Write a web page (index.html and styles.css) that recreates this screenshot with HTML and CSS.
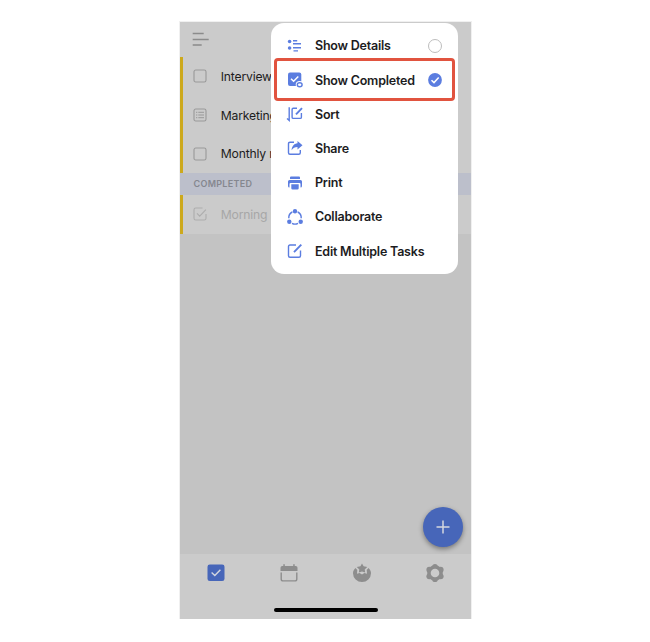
FILE: index.html
```html
<!DOCTYPE html>
<html lang="en">
<head>
<meta charset="utf-8">
<title>Tasks</title>
<link rel="stylesheet" href="styles.css">
</head>
<body>
<main class="phone">
  <header class="topbar">
    <svg width="18" height="14" viewBox="0 0 18 14" fill="none" stroke="#8b8b8b" stroke-width="1.4"><path d="M.7 1.500h11M.7 7.500h16M.7 13h9"/></svg>
  </header>
  <section class="tasks">
    <div class="task"><svg class="box" viewBox="0 0 14 14"><rect x="1" y="1" width="12" height="12" rx="1.8"/></svg><span>Interview</span></div>
    <div class="task"><svg class="box" viewBox="0 0 14 14"><rect x="1" y="1" width="12" height="12" rx="1.8"/><path stroke-width="1" d="M3 4.3h1.3M5.3 4.3H11M3 7h1.3M5.3 7H11M3 9.7h1.3M5.3 9.7H11"/></svg><span>Marketing</span></div>
    <div class="task"><svg class="box" viewBox="0 0 14 14"><rect x="1" y="1" width="12" height="12" rx="1.8"/></svg><span>Monthly r</span></div>
  </section>
  <h2 class="section-title">COMPLETED</h2>
  <section class="tasks">
    <div class="task done"><svg class="box" viewBox="0 0 14 14"><path d="M9.500 1H2.800Q1 1 1 2.800v8.400Q1 13 2.800 13h8.400q1.800 0 1.800-1.800V7M4 6.300l2.700 2.800 6.200-6.500"/></svg><span>Morning r</span></div>
  </section>
  <div class="canvas"></div>
  <nav class="tabbar">
    <div class="tabs">
      <svg width="20" height="20" viewBox="0 0 20 20"><rect x="1.500" y="1.500" width="17" height="16.500" rx="2.300" fill="#4766b9"/><path d="M5.600 9.600l3.200 3 5.600-5.900" fill="none" stroke="#d3d6df" stroke-width="1.400"/></svg>
      <svg width="20" height="20" viewBox="0 0 20 20"><path d="M1.500 8V4.800q0-1.800 1.800-1.800h13.400q1.800 0 1.800 1.800V8zM4.300 1.200h1.500V4H4.300zM14.200 1.200h1.500V4h-1.500z" fill="#8d8d8d"/><path d="M2.200 9.500V16q0 1.900 1.900 1.900h11.800q1.900 0 1.900-1.900V9.500" fill="none" stroke="#8d8d8d" stroke-width="1.400"/></svg>
      <svg width="20" height="20" viewBox="0 0 20 20"><path d="M3.500 5C1.800 6.500 1 8.300 1 10.300a9 8.700 0 0 0 18 0c0-2-.8-3.800-2.500-5.300L14.700 7l.3 3.800-2.600-.7L10 11.400 7.600 10.100l-2.600.7L5.300 7z" fill="#8d8d8d"/><path d="M10 .6l1.600 2.700 3.600.6-2.500 2.600.5 2.900L10 8.600 6.800 9.400l.5-2.900-2.500-2.600 3.600-.6z" fill="#8d8d8d"/></svg>
      <svg width="20" height="20" viewBox="0 0 20 20"><g fill="#8d8d8d"><circle cx="10" cy="10" r="7.800"/><circle cx="10" cy="3.600" r="2.700"/><circle cx="10" cy="16.400" r="2.700"/><circle cx="4.300" cy="6.700" r="2.900"/><circle cx="15.700" cy="6.700" r="2.900"/><circle cx="4.300" cy="13.300" r="2.900"/><circle cx="15.700" cy="13.300" r="2.900"/></g><circle cx="10" cy="10" r="4.300" fill="#cbcbcb"/></svg>
    </div>
    <div class="home-indicator"></div>
  </nav>
  <div class="fab"><svg width="16" height="16" viewBox="0 0 16 16"><path d="M8 1.500v13M1.500 8h13" stroke="#d5d7de" stroke-width="1.500"/></svg></div>
  <div class="menu">
    <div class="item">
      <svg class="icon" viewBox="0 0 16 16"><g fill="#5b7de0"><circle cx="2.600" cy="3.500" r="1.800"/><circle cx="2.600" cy="10" r="1.800"/></g><path d="M6 2.800h4.200M6 5.800h8M6 9.800h8M6.500 12.900h4.500" class="line"/></svg>
      <span>Show Details</span><i class="radio"></i>
    </div>
    <div class="item">
      <svg class="icon" viewBox="0 0 16 16"><rect x="1" y=".5" width="13.300" height="13.500" rx="2" fill="#5b7de0"/><path d="M4 6.800l2.600 2.500L11.300 4.500" fill="none" stroke="#fff" stroke-width="1.500"/><ellipse cx="12.700" cy="12.700" rx="4" ry="3.600" fill="#fff"/><ellipse cx="12.700" cy="12.700" rx="2.400" ry="2" class="line"/></svg>
      <span>Show Completed</span>
      <svg class="check" viewBox="0 0 14 14"><circle cx="7" cy="7" r="6.900" fill="#5b7de0"/><path d="M3.500 7.200l2.500 2.400 4.700-5" fill="none" stroke="#fff" stroke-width="1.500"/></svg>
    </div>
    <div class="item">
      <svg class="icon" viewBox="0 0 16 16"><path class="line" d="M2.200 1.200v13.200L0 12.500M10 2.200H6.300q-1.200 0-1.200 1.200v7.800q0 1.200 1.200 1.200h6.900q1.200 0 1.200-1.200V7"/><path class="line thick" d="M9 8.400l6-6.200"/></svg>
      <span>Sort</span>
    </div>
    <div class="item">
      <svg class="icon" viewBox="0 0 16 16"><path class="line" d="M7 2.200H3q-1.500 0-1.500 1.500v9.100q0 1.500 1.500 1.500h8.800q1.500 0 1.500-1.500V10"/><path d="M10.500 1L15.500 5.200l-5 4.200V7C7.700 7 6.200 8 4.600 10.300c.2-4 2.300-6.600 5.900-7z" fill="#5b7de0"/></svg>
      <span>Share</span>
    </div>
    <div class="item">
      <svg class="icon" viewBox="0 0 16 16"><path d="M4 1.500h8q1 0 1 1V4H3V2.500q0-1 1-1zM2.500 5h11Q15 5 15 6.500V11q0 1.500-1.500 1.500V9q0-1-1-1h-9q-1 0-1 1v3.500Q1 12.500 1 11V6.500Q1 5 2.500 5zM4.300 9.300h7.400v3.900q0 1.300-1.300 1.300H5.600q-1.300 0-1.300-1.300z" fill="#5b7de0"/></svg>
      <span>Print</span>
    </div>
    <div class="item">
      <svg class="icon" viewBox="0 0 16 16"><path class="line" d="M5.300 3A6.400 6.400 0 0 0 1.800 9.200M10.700 3a6.400 6.400 0 0 1 3.500 6.200M5 14.300a6.400 6.400 0 0 0 6 0"/><g fill="#5b7de0"><circle cx="8" cy="2.200" r="2.200"/><circle cx="2.300" cy="12.800" r="2.200"/><circle cx="13.700" cy="12.800" r="2.200"/></g></svg>
      <span>Collaborate</span>
    </div>
    <div class="item">
      <svg class="icon" viewBox="0 0 16 16"><path class="line" d="M9 2H3Q1.500 2 1.500 3.500v9.300q0 1.500 1.500 1.500h9q1.500 0 1.500-1.500V7.500"/><path class="line thick" d="M7 9.100l7.300-7.500"/></svg>
      <span>Edit Multiple Tasks</span>
    </div>
  </div>
  <div class="highlight"></div>
</main>
</body>
</html>
```
FILE: styles.css
```css
* { box-sizing: border-box; }
body {
  margin: 0;
  background: #fff;
  font-family: Inter, "Liberation Sans", sans-serif;
}
.phone {
  position: relative;
  display: flex;
  flex-direction: column;
  width: 291px;
  height: 597px;
  margin: 22px 0 0 180px;
  background: #cbcbcb;
  box-shadow: 0 0 0 1px #f0f0f0;
}
.topbar {
  height: 35px;
  padding: 10px 12px;
}
.topbar svg { display: block; }
.tasks { border-left: 3px solid #cda91c; }
.task {
  display: flex;
  align-items: center;
  gap: 13.6px;
  height: 38.7px;
  padding-left: 10.2px;
  color: #1d1d1d;
  font-size: 12.2px;
  letter-spacing: -0.2px;
  white-space: nowrap;
}
.box {
  width: 14px;
  height: 14px;
  fill: none;
  stroke: #999;
  stroke-width: 1.1;
}
.done { color: #a7a7a7; }
.done .box { stroke: #adadad; }
.section-title {
  height: 22px;
  margin: 0;
  padding-left: 13.5px;
  background: #bcbfcb;
  color: #85878f;
  font-size: 9px;
  font-weight: 600;
  line-height: 22px;
  letter-spacing: 0.3px;
}
.canvas {
  flex: 1;
  background: #c3c3c3;
}
.tabbar {
  display: flex;
  flex-direction: column;
  align-items: center;
  height: 65px;
}
.tabs {
  display: grid;
  grid-template-columns: repeat(4, 1fr);
  justify-items: center;
  width: 100%;
  padding-top: 9px;
}
.home-indicator {
  width: 104px;
  height: 4px;
  margin-top: 25px;
  border-radius: 2px;
  background: #000;
}
.fab {
  position: absolute;
  left: 243px;
  top: 485px;
  display: grid;
  place-items: center;
  width: 40px;
  height: 40px;
  border-radius: 50%;
  background: #4766b9;
  box-shadow: 0 2px 5px rgba(0, 0, 0, 0.4);
}
.menu {
  position: absolute;
  left: 91.4px;
  top: 1px;
  width: 187px;
  height: 251px;
  padding: 5.8px 16.4px 0 15.4px;
  border-radius: 13px;
  background: #fff;
}
.item {
  display: flex;
  align-items: center;
  height: 34.2px;
  color: #1c1c1e;
  font-size: 12.5px;
  font-weight: 600;
  letter-spacing: -0.22px;
  white-space: nowrap;
}
.icon {
  width: 16px;
  height: 16px;
  margin-right: 12.2px;
  overflow: visible;
}
.line {
  fill: none;
  stroke: #5b7de0;
  stroke-width: 1.4;
}
.thick { stroke-width: 1.9; }
.radio, .check {
  width: 14px;
  height: 14px;
  margin-left: auto;
}
.radio {
  border: 1px solid #bdbdbd;
  border-radius: 50%;
}
.highlight {
  position: absolute;
  left: 94px;
  top: 36px;
  width: 181px;
  height: 43px;
  border: 3px solid #e1533f;
  border-radius: 4px;
}
```
